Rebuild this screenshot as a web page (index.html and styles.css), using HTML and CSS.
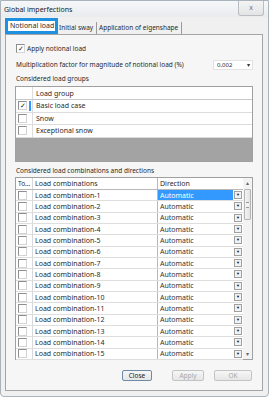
FILE: index.html
```html
<!DOCTYPE html>
<html lang="en">

<head>
    <meta charset="UTF-8">
    <title>Global imperfections</title>
    <link rel="stylesheet" href="styles.css">
</head>

<body>
    <div class="window">
        <!-- Title bar -->
        <div class="titlebar">
            <span class="title">Global imperfections</span>
            <span class="close">x</span>
        </div>

        <!-- Tabs -->
        <div class="tabs">
            <div class="tab active">Notional load</div>
            <div class="tab">Initial sway</div>
            <div class="tab">Application of eigenshape</div>
        </div>

        <div class="panel">
            <div class="check-row"><span class="cb checked">&#10003;</span>Apply notional load</div>

            <div class="factor-row">
                <span>Multiplication factor for magnitude of notional load (%)</span>
                <div class="combo">0,002<span class="combo-arrow">&#9662;</span></div>
            </div>

            <div class="caption">Considered load groups</div>
            <div class="groups">
                <div class="g-row g-head">
                    <div class="g-cell c-check"></div>
                    <div class="g-cell">Load group</div>
                </div>
                <div class="g-row">
                    <div class="g-cell c-check focus"><span class="cb checked">&#10003;</span></div>
                    <div class="g-cell">Basic load case</div>
                </div>
                <div class="g-row">
                    <div class="g-cell c-check"><span class="cb"></span></div>
                    <div class="g-cell">Snow</div>
                </div>
                <div class="g-row">
                    <div class="g-cell c-check"><span class="cb"></span></div>
                    <div class="g-cell">Exceptional snow</div>
                </div>
                <div class="g-empty"></div>
            </div>

            <div class="caption">Considered load combinations and directions</div>
            <div class="combos">
                <div class="combo-rows">
                    <div class="r-row r-head">
                        <div class="r-cell c-to">To...</div>
                        <div class="r-cell c-name">Load combinations</div>
                        <div class="r-cell c-dir">Direction</div>
                    </div>
                    <div class="r-row">
                        <div class="r-cell c-to"><span class="cb"></span></div>
                        <div class="r-cell c-name">Load combination-1</div>
                        <div class="r-cell c-dir"><span class="dir-text selected">Automatic</span><span class="dd">&#9660;</span></div>
                    </div>
                    <div class="r-row">
                        <div class="r-cell c-to"><span class="cb"></span></div>
                        <div class="r-cell c-name">Load combination-2</div>
                        <div class="r-cell c-dir"><span class="dir-text">Automatic</span><span class="dd">&#9660;</span></div>
                    </div>
                    <div class="r-row">
                        <div class="r-cell c-to"><span class="cb"></span></div>
                        <div class="r-cell c-name">Load combination-3</div>
                        <div class="r-cell c-dir"><span class="dir-text">Automatic</span><span class="dd">&#9660;</span></div>
                    </div>
                    <div class="r-row">
                        <div class="r-cell c-to"><span class="cb"></span></div>
                        <div class="r-cell c-name">Load combination-4</div>
                        <div class="r-cell c-dir"><span class="dir-text">Automatic</span><span class="dd">&#9660;</span></div>
                    </div>
                    <div class="r-row">
                        <div class="r-cell c-to"><span class="cb"></span></div>
                        <div class="r-cell c-name">Load combination-5</div>
                        <div class="r-cell c-dir"><span class="dir-text">Automatic</span><span class="dd">&#9660;</span></div>
                    </div>
                    <div class="r-row">
                        <div class="r-cell c-to"><span class="cb"></span></div>
                        <div class="r-cell c-name">Load combination-6</div>
                        <div class="r-cell c-dir"><span class="dir-text">Automatic</span><span class="dd">&#9660;</span></div>
                    </div>
                    <div class="r-row">
                        <div class="r-cell c-to"><span class="cb"></span></div>
                        <div class="r-cell c-name">Load combination-7</div>
                        <div class="r-cell c-dir"><span class="dir-text">Automatic</span><span class="dd">&#9660;</span></div>
                    </div>
                    <div class="r-row">
                        <div class="r-cell c-to"><span class="cb"></span></div>
                        <div class="r-cell c-name">Load combination-8</div>
                        <div class="r-cell c-dir"><span class="dir-text">Automatic</span><span class="dd">&#9660;</span></div>
                    </div>
                    <div class="r-row">
                        <div class="r-cell c-to"><span class="cb"></span></div>
                        <div class="r-cell c-name">Load combination-9</div>
                        <div class="r-cell c-dir"><span class="dir-text">Automatic</span><span class="dd">&#9660;</span></div>
                    </div>
                    <div class="r-row">
                        <div class="r-cell c-to"><span class="cb"></span></div>
                        <div class="r-cell c-name">Load combination-10</div>
                        <div class="r-cell c-dir"><span class="dir-text">Automatic</span><span class="dd">&#9660;</span></div>
                    </div>
                    <div class="r-row">
                        <div class="r-cell c-to"><span class="cb"></span></div>
                        <div class="r-cell c-name">Load combination-11</div>
                        <div class="r-cell c-dir"><span class="dir-text">Automatic</span><span class="dd">&#9660;</span></div>
                    </div>
                    <div class="r-row">
                        <div class="r-cell c-to"><span class="cb"></span></div>
                        <div class="r-cell c-name">Load combination-12</div>
                        <div class="r-cell c-dir"><span class="dir-text">Automatic</span><span class="dd">&#9660;</span></div>
                    </div>
                    <div class="r-row">
                        <div class="r-cell c-to"><span class="cb"></span></div>
                        <div class="r-cell c-name">Load combination-13</div>
                        <div class="r-cell c-dir"><span class="dir-text">Automatic</span><span class="dd">&#9660;</span></div>
                    </div>
                    <div class="r-row">
                        <div class="r-cell c-to"><span class="cb"></span></div>
                        <div class="r-cell c-name">Load combination-14</div>
                        <div class="r-cell c-dir"><span class="dir-text">Automatic</span><span class="dd">&#9660;</span></div>
                    </div>
                    <div class="r-row">
                        <div class="r-cell c-to"><span class="cb"></span></div>
                        <div class="r-cell c-name">Load combination-15</div>
                        <div class="r-cell c-dir"><span class="dir-text">Automatic</span><span class="dd">&#9660;</span></div>
                    </div>
                </div>

                <!-- Scroll bar -->
                <div class="scrollbar">
                    <span class="sb-arrow">&#9652;</span>
                    <div class="sb-thumb"><span class="grip"></span></div>
                    <span class="sb-space"></span>
                    <span class="sb-arrow">&#9662;</span>
                </div>
            </div>

            <!-- Dialog buttons -->
            <div class="buttons">
                <button class="btn btn-close">Close</button>
                <button class="btn btn-apply" disabled>Apply</button>
                <button class="btn btn-ok" disabled>OK</button>
            </div>
        </div>
    </div>
</body>

</html>
```

FILE: styles.css
```css
body {
    margin: 0;
    background-color: #ffffff;
    font-family: 'Noto Sans', 'Liberation Sans', sans-serif;
    font-size: 6.5px;
    color: #2a2a2a;
}

.window {
    width: 269px;
    height: 397px;
    box-sizing: border-box;
    border: 1px solid #aab2ba;
    border-radius: 0 0 4px 4px;
    background-color: #f0f0f0;
    padding: 0 5px 5px 4px;
    display: flex;
    flex-direction: column;
}

/* title bar */
.titlebar {
    height: 16px;
    margin: 0 -5px 0 -4px;
    padding: 0 4px 0 3px;
    display: flex;
    align-items: center;
    justify-content: space-between;
    background: linear-gradient(#f5f7f9, #e9ecef);
}

.title {
    font-size: 7px;
    color: #222;
}

.close {
    width: 24px;
    height: 14px;
    margin-top: -2px;
    border: 1px solid #b9bec4;
    border-top: none;
    border-radius: 0 0 3px 3px;
    background: linear-gradient(#f4f4f4, #e2e4e6);
    color: #777;
    font-size: 7px;
    line-height: 13px;
    text-align: center;
}

/* tabs */
.tabs {
    height: 17px;
    display: flex;
    align-items: flex-end;
}

.tab {
    height: 12px;
    line-height: 12px;
    box-sizing: border-box;
    padding: 0 0 0 2px;
    border-right: 1px solid #9a9a9a;
    font-size: 6.5px;
    white-space: nowrap;
    overflow: hidden;
}

.tab.active {
    width: 53px;
    height: 16px;
    line-height: 10px;
    padding: 0 0 0 2px;
    border: 3px solid #1e90e0;
    background-color: #ffffff;
    font-size: 7px;
}

.tab:nth-child(2) {
    width: 39px;
    padding-left: 1px;
}

.tab:nth-child(3) {
    width: 85px;
    padding-left: 2px;
}

/* main panel */
.panel {
    flex: 1;
    border: 1px solid #a5a5a5;
    background-color: #f6f6f6;
    padding: 0 9px;
    display: flex;
    flex-direction: column;
}

.cb {
    width: 7px;
    height: 7px;
    flex: none;
    border: 1px solid #8e8e8e;
    border-right-color: #d4d4d4;
    border-bottom-color: #d4d4d4;
    background-color: #ffffff;
    display: inline-flex;
    align-items: center;
    justify-content: center;
    font-size: 7px;
    line-height: 7px;
    color: #222;
}

.check-row {
    margin-top: 9px;
    height: 9px;
    padding-left: 1px;
    display: flex;
    align-items: center;
    gap: 2px;
}

.factor-row {
    margin-top: 6px;
    height: 11px;
    padding-left: 1px;
    display: flex;
    align-items: center;
    justify-content: space-between;
}

.combo {
    width: 40px;
    height: 10px;
    box-sizing: border-box;
    padding: 0 2px 0 3px;
    background-color: #ffffff;
    border: 1px solid #e2e2e2;
    display: flex;
    align-items: center;
    justify-content: space-between;
    font-size: 6px;
}

.combo-arrow {
    font-size: 6px;
    color: #333;
}

.caption {
    margin-top: 4px;
    height: 10px;
    line-height: 10px;
    padding-left: 1px;
}

/* load groups table */
.groups {
    margin-top: 2px;
    height: 76px;
    box-sizing: border-box;
    border: 1px solid #a0a0a0;
    display: flex;
    flex-direction: column;
}

.g-row {
    height: 12.5px;
    display: flex;
    background-color: #ffffff;
    border-bottom: 1px solid #dcdcdc;
    box-sizing: border-box;
}

.g-row.g-head {
    height: 13px;
    border-bottom-color: #c8c8c8;
}

.g-cell {
    display: flex;
    align-items: center;
    padding-left: 3px;
    font-size: 7px;
}

.c-check {
    width: 17px;
    box-sizing: border-box;
    padding-left: 2px;
    border-right: 1px solid #dcdcdc;
    position: relative;
}

.c-check.focus::after {
    content: '';
    position: absolute;
    right: 1px;
    top: 1px;
    bottom: 1px;
    width: 2px;
    background-color: #3399ff;
}

.g-empty {
    flex: 1;
    background-color: #a3a3a3;
}

/* load combinations table */
.combos {
    margin-top: 1px;
    height: 183px;
    box-sizing: border-box;
    border: 1px solid #a0a0a0;
    background-color: #ffffff;
    display: flex;
}

.combo-rows {
    width: 227px;
    display: grid;
    grid-template-rows: 12px;
    grid-auto-rows: 11.33px;
}

.r-row {
    display: flex;
    border-bottom: 1px solid #dedede;
    box-sizing: border-box;
}

.r-row.r-head {
    border-bottom-color: #b8b8b8;
}

.r-cell {
    display: flex;
    align-items: center;
    box-sizing: border-box;
    font-size: 7px;
}

.c-to {
    width: 17px;
    padding-left: 2px;
    border-right: 1px solid #d8d8d8;
}

.c-name {
    width: 125px;
    padding-left: 2px;
    border-right: 1px solid #b8b8b8;
}

.c-dir {
    flex: 1;
    padding-left: 0;
}

.r-head .c-dir {
    padding-left: 2px;
}

.r-head .c-to {
    font-size: 6.5px;
}

.dir-text {
    flex: 1;
    align-self: stretch;
    display: flex;
    align-items: center;
    padding-left: 2px;
    color: #333;
}

.dir-text.selected {
    background-color: #3399ff;
    color: #ffffff;
}

.dd {
    width: 8px;
    height: 8px;
    margin: 0 1px;
    box-sizing: border-box;
    border: 1px solid #a0a0a0;
    background-color: #f2f2f2;
    font-size: 4px;
    line-height: 6px;
    text-align: center;
    color: #111;
}

.scrollbar {
    flex: 1;
    background-color: #f3f3f3;
    display: flex;
    flex-direction: column;
    align-items: center;
}

.sb-arrow {
    height: 10px;
    line-height: 10px;
    font-size: 6px;
    color: #666;
}

.sb-thumb {
    width: 7px;
    height: 31px;
    margin-top: 1px;
    box-sizing: border-box;
    border: 1px solid #b5b5b5;
    border-radius: 1px;
    background: linear-gradient(90deg, #f2f2f2, #e4e4e4);
    display: flex;
    align-items: center;
    justify-content: center;
}

.grip {
    width: 3px;
    height: 4px;
    border-top: 1px solid #999;
    border-bottom: 1px solid #999;
    background: linear-gradient(#f2f2f2 40%, #999 40%, #999 60%, #f2f2f2 60%);
}

.sb-space {
    flex: 1;
}

/* dialog buttons */
.buttons {
    margin-top: 10px;
    display: flex;
    justify-content: flex-end;
    padding-right: 1px;
}

.btn {
    height: 11px;
    padding: 0;
    font-family: inherit;
    font-size: 6.5px;
    border: 1px solid #c4c4c4;
    border-radius: 2px;
    background: linear-gradient(#f6f6f6, #e6e6e6);
    color: #a8a8a8;
}

.btn-close {
    width: 30px;
    border-color: #6f8aa6;
    color: #222;
}

.btn-apply {
    width: 32px;
    margin-left: 20px;
}

.btn-ok {
    width: 38px;
    margin-left: 10px;
}
```
